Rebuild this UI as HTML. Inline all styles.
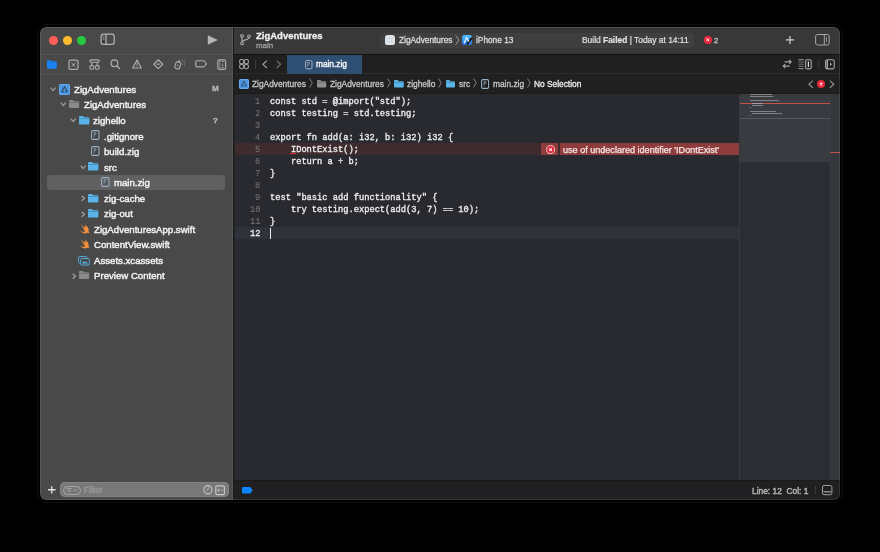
<!DOCTYPE html>
<html><head><meta charset="utf-8">
<style>
*{margin:0;padding:0;box-sizing:border-box}
html,body{width:880px;height:552px;background:#000;overflow:hidden;font-family:"Liberation Sans",sans-serif;}
.a{position:absolute}
.t{position:absolute;white-space:pre;line-height:1;-webkit-text-stroke-width:0.3px;will-change:transform}
svg{overflow:visible}
</style></head><body>

<div class="a" style="left:40px;top:27px;width:800px;height:473px;border-radius:6px;overflow:hidden;background:#292a30">
<div class="a" style="left:0px;top:0px;width:192px;height:473px;background:#494949;"></div>
<div class="a" style="left:0px;top:27px;width:192px;height:1px;background:#525252;"></div>
<div class="a" style="left:0px;top:46.6px;width:192px;height:1px;background:#525252;"></div>
<div class="a" style="left:192px;top:0px;width:1px;height:473px;background:#565656;"></div>
<div class="a" style="left:193px;top:0px;width:1px;height:473px;background:#1a1a1a;"></div>
<div class="a" style="left:194px;top:0px;width:1px;height:473px;background:#232428;"></div>
<div class="a" style="left:194px;top:0px;width:606px;height:27px;background:#383838;"></div>
<div class="a" style="left:194px;top:26.5px;width:606px;height:1.5px;background:#121212;"></div>
<div class="a" style="left:194px;top:28px;width:606px;height:18px;background:#202020;"></div>
<div class="a" style="left:194px;top:46px;width:606px;height:1.2px;background:#2c2c2c;"></div>
<div class="a" style="left:194px;top:47.2px;width:606px;height:18.8px;background:#202020;"></div>
<div class="a" style="left:194px;top:65.6px;width:606px;height:1px;background:#1b1b1c;"></div>
<div class="a" style="left:195px;top:67px;width:504px;height:386px;background:#292a30;"></div>
<div class="a" style="left:699px;top:67px;width:1px;height:386px;background:#38393e;"></div>
<div class="a" style="left:700px;top:67px;width:90px;height:386px;background:#2c2d32;"></div>
<div class="a" style="left:700px;top:67px;width:90px;height:68px;background:#3a3b40;"></div>
<div class="a" style="left:790px;top:67px;width:10px;height:386px;background:#35363b;"></div>
<div class="a" style="left:790px;top:67px;width:1px;height:386px;background:#3d3e43;"></div>
<div class="a" style="left:194px;top:453px;width:606px;height:1px;background:#1a1a1a;"></div>
<div class="a" style="left:194px;top:454px;width:606px;height:19px;background:#202022;"></div>
<div class="a" style="left:0px;top:1px;width:800px;height:1px;background:rgba(0,0,0,0.12);"></div>
</div>
<div class="a" style="left:40px;top:27px;width:800px;height:473px;border-radius:6px;box-shadow:inset 0 0 0 1px rgba(255,255,255,0.09), inset 0 1px 0 rgba(255,255,255,0.05), 0 0 0 2px #000, 0 0 0 3px #0f0f0f;"></div>
<div class="a" style="left:48.7px;top:35.6px;width:9px;height:9px;border-radius:50%;background:#fe5f57"></div>
<div class="a" style="left:63.0px;top:35.6px;width:9px;height:9px;border-radius:50%;background:#febc2e"></div>
<div class="a" style="left:77.0px;top:35.6px;width:9px;height:9px;border-radius:50%;background:#28c840"></div>
<svg class="a" style="left:100.4px;top:33.3px;" width="16" height="12.5" viewBox="0 0 16 12.5"><rect x="1.1" y="1.1" width="13.1" height="10.3" rx="2.3" fill="none" stroke="#b2b2b2" stroke-width="1.25"/><path d="M6 1.1 V11.4" stroke="#b2b2b2" stroke-width="1.25"/><path d="M2.7 3.3 H4.3 M2.7 4.8 H4.3 M2.7 6.3 H4.3" stroke="#9a9a9a" stroke-width="0.8"/><rect x="2.5" y="7.6" width="2" height="2.4" fill="#303030"/></svg>
<svg class="a" style="left:207px;top:35px;" width="12" height="10" viewBox="0 0 12 10"><path d="M0.8 0.3 L10.8 5 L0.8 9.7 Z" fill="#b4b4b4"/></svg>
<svg class="a" style="left:239.5px;top:34.4px;" width="11" height="11.2" viewBox="0 0 11 11.2"><circle cx="2" cy="1.9" r="1.35" fill="none" stroke="#a6a6a6" stroke-width="1.1"/><circle cx="2" cy="9.4" r="1.35" fill="none" stroke="#a6a6a6" stroke-width="1.1"/><circle cx="9" cy="2.3" r="1.35" fill="none" stroke="#a6a6a6" stroke-width="1.1"/><path d="M2 3.3 V8 M9 3.7 C9 6.2 2.2 5.6 2 7.8" fill="none" stroke="#a6a6a6" stroke-width="1.15"/></svg>
<div class="t" style="left:256.20px;top:30.76px;font-size:9.5px;color:#f0f0f0;font-weight:700;font-family:'Liberation Sans';">ZigAdventures</div>
<div class="t" style="left:256.20px;top:41.61px;font-size:7.9px;color:#a0a0a0;font-weight:400;font-family:'Liberation Sans';">main</div>
<div class="a" style="left:380px;top:32.5px;width:314px;height:15.5px;border-radius:4px;background:#3f3f3f"></div>
<div class="a" style="left:384.9px;top:35px;width:10px;height:10px;border-radius:2.6px;background:#dce2e5"></div>
<svg class="a" style="left:384.9px;top:35px;" width="10" height="10" viewBox="0 0 10 10"><g fill="#c4cace"><circle cx="3.5" cy="3.5" r="0.6"/><circle cx="6.5" cy="3.5" r="0.6"/><circle cx="3.5" cy="6.5" r="0.6"/><circle cx="6.5" cy="6.5" r="0.6"/></g></svg>
<div class="t" style="left:398.80px;top:36.27px;font-size:8.3px;color:#dcdcdc;font-weight:400;font-family:'Liberation Sans';">ZigAdventures</div>
<svg class="a" style="left:455px;top:35px;" width="5" height="10" viewBox="0 0 5 10"><path d="M0.8 0.5 L3.8 5 L0.8 9.5" fill="none" stroke="#a0a0a0" stroke-width="0.9"/></svg>
<div class="a" style="left:462.2px;top:35px;width:10.3px;height:10.3px;border-radius:2.6px;background:linear-gradient(180deg,#4cc0ff,#2a70e6)"></div>
<svg class="a" style="left:462.2px;top:35px;" width="10.3" height="10.3" viewBox="0 0 10.3 10.3"><path d="M4.6 2.3 L2.2 8.2 M4.6 2.3 L6.6 6.2" stroke="#f2f8ff" stroke-width="1.1" fill="none"/><path d="M9.3 3.6 L5.4 8.8" stroke="#101010" stroke-width="1.9" stroke-linecap="round"/><circle cx="6.5" cy="5.8" r="0.9" fill="#e0e0e0"/></svg>
<div class="t" style="left:475.60px;top:36.27px;font-size:8.3px;color:#dcdcdc;font-weight:400;font-family:'Liberation Sans';">iPhone 13</div>
<div class="t" style="left:582.40px;top:36.27px;font-size:8.42px;color:#e0e0e0;font-weight:400;font-family:'Liberation Sans';-webkit-text-stroke-width:0.2px">Build <b>Failed</b> | Today at 14:11</div>
<div class="a" style="left:704.3px;top:36.3px;width:7.5px;height:7.5px;border-radius:50%;background:#e8283c"></div>
<svg class="a" style="left:704.3px;top:36.3px;" width="7.5" height="7.5" viewBox="0 0 7.5 7.5"><path d="M2.4 2.4 L5.1 5.1 M5.1 2.4 L2.4 5.1" stroke="#fff" stroke-width="1"/></svg>
<div class="t" style="left:713.60px;top:36.87px;font-size:7.6px;color:#c4c4c4;font-weight:400;font-family:'Liberation Sans';">2</div>
<svg class="a" style="left:785px;top:35.2px;" width="10" height="9.5" viewBox="0 0 10 9.5"><path d="M5 0.9 V8.9 M0.9 4.9 H9.1" stroke="#cccccc" stroke-width="1.25"/></svg>
<svg class="a" style="left:815px;top:34px;" width="15" height="12" viewBox="0 0 15 12"><rect x="0.6" y="0.5" width="13.6" height="10.5" rx="2" fill="none" stroke="#a6a6a6" stroke-width="1"/><line x1="9.3" y1="0.5" x2="9.3" y2="11" stroke="#a6a6a6" stroke-width="1"/><line x1="11.5" y1="3" x2="11.5" y2="8" stroke="#a6a6a6" stroke-width="0.8"/></svg>
<svg class="a" style="left:46.5px;top:59.5px;" width="10" height="9" viewBox="0 0 10 9"><path d="M0 1 Q0 0.2 0.8 0.2 H3.6 L4.6 1.3 H9.1 Q9.8 1.3 9.8 2 V8 Q9.8 8.7 9.1 8.7 H0.7 Q0 8.7 0 8 Z" fill="#1a84f5"/><path d="M0 2.4 H9.8" stroke="#1466c0" stroke-width="0.5"/></svg>
<svg class="a" style="left:67.5px;top:58.6px;" width="11" height="11" viewBox="0 0 11 11"><rect x="1" y="1" width="9" height="9.4" rx="1.6" fill="none" stroke="#acacac" stroke-width="1.25"/><path d="M3.3 3.3 L7.7 8.1 M7.7 3.3 L3.3 8.1" stroke="#acacac" stroke-width="0.7"/><circle cx="5.5" cy="5.7" r="0.8" fill="#d0d0d0"/></svg>
<svg class="a" style="left:88.5px;top:58.6px;" width="11" height="11" viewBox="0 0 11 11"><rect x="0.9" y="0.9" width="9.3" height="2.3" rx="1.15" fill="none" stroke="#acacac" stroke-width="1.15"/><path d="M2.8 3.2 V6.4 M8.2 3.2 V6.4" stroke="#acacac" stroke-width="1.1"/><rect x="0.9" y="6.6" width="3.8" height="3.6" rx="1.2" fill="none" stroke="#acacac" stroke-width="1.15"/><rect x="6.4" y="6.6" width="3.8" height="3.6" rx="1.2" fill="none" stroke="#acacac" stroke-width="1.15"/></svg>
<svg class="a" style="left:110px;top:58.5px;" width="11" height="11" viewBox="0 0 11 11"><circle cx="4.4" cy="4.3" r="3.4" fill="none" stroke="#acacac" stroke-width="1.2"/><path d="M6.9 6.9 L9.5 9.6" stroke="#acacac" stroke-width="1.4" stroke-linecap="round"/></svg>
<svg class="a" style="left:131.5px;top:58.5px;" width="10" height="10" viewBox="0 0 10 10"><path d="M5 1 L9.3 9 H0.7 Z" fill="none" stroke="#acacac" stroke-width="1.2" stroke-linejoin="round"/><path d="M5 3.6 V6.6" stroke="#acacac" stroke-width="0.9"/><circle cx="5" cy="7.6" r="0.5" fill="#acacac"/></svg>
<svg class="a" style="left:152.5px;top:58.5px;" width="11" height="11" viewBox="0 0 11 11"><path d="M5.3 0.8 L9.8 5.2 L5.3 9.6 L0.8 5.2 Z" fill="none" stroke="#acacac" stroke-width="1.2" stroke-linejoin="round"/><path d="M4 5.2 H6.6" stroke="#acacac" stroke-width="1.3" stroke-linecap="round"/></svg>
<svg class="a" style="left:173.5px;top:58.5px;" width="12" height="11" viewBox="0 0 12 11"><g transform="rotate(18 3.6 6.5)"><rect x="1.2" y="3" width="5" height="6.8" rx="1.5" fill="none" stroke="#acacac" stroke-width="1.1"/><rect x="2.6" y="1.2" width="2.2" height="1.6" fill="#acacac"/><circle cx="3.7" cy="6.4" r="0.7" fill="#acacac"/></g><g fill="#acacac" opacity="0.8"><circle cx="8.6" cy="0.9" r="0.5"/><circle cx="10.3" cy="1.9" r="0.5"/><circle cx="8.4" cy="2.9" r="0.5"/><circle cx="10.8" cy="3.9" r="0.5"/><circle cx="8.6" cy="4.9" r="0.5"/><circle cx="10.4" cy="6.1" r="0.5"/></g></svg>
<svg class="a" style="left:194.5px;top:60px;" width="12.5" height="8" viewBox="0 0 12.5 8"><path d="M2 0.75 H8.4 Q9.2 0.75 9.8 1.5 L11.3 3.75 L9.8 6 Q9.2 6.85 8.4 6.85 H2 Q0.75 6.85 0.75 5.6 V2 Q0.75 0.75 2 0.75 Z" fill="none" stroke="#acacac" stroke-width="1.2"/></svg>
<svg class="a" style="left:217px;top:58.6px;" width="9.5" height="11" viewBox="0 0 9.5 11"><rect x="0.8" y="0.9" width="7.8" height="9.4" rx="1.6" fill="none" stroke="#acacac" stroke-width="1.2"/><path d="M2.8 1 V10.2" stroke="#acacac" stroke-width="0.7"/><path d="M4.3 2.4 H7 M5.6 4.6 V7.4 M4.3 8.8 H7" stroke="#acacac" stroke-width="0.8"/></svg>
<svg class="a" style="left:239px;top:59px;" width="10" height="10.3" viewBox="0 0 10 10.3"><rect x="0.6" y="0.6" width="4.1" height="4.2" rx="1.6" fill="none" stroke="#a6a6a6" stroke-width="1.05"/><rect x="0.6" y="5.5" width="4.1" height="4.2" rx="1.6" fill="none" stroke="#a6a6a6" stroke-width="1.05"/><rect x="5.3" y="0.6" width="4.1" height="4.2" rx="1.6" fill="none" stroke="#a6a6a6" stroke-width="1.05"/><rect x="5.3" y="5.5" width="4.1" height="4.2" rx="1.6" fill="none" stroke="#a6a6a6" stroke-width="1.05"/></svg>
<div class="a" style="left:255px;top:59.5px;width:1px;height:9px;background:#3c3c3c;"></div>
<svg class="a" style="left:261.8px;top:59.6px;" width="6" height="8.6" viewBox="0 0 6 8.6"><path d="M4.9 0.6 L0.9 4.3 L4.9 8" fill="none" stroke="#a4a4a4" stroke-width="1.15"/></svg>
<svg class="a" style="left:275.6px;top:59.6px;" width="6" height="8.6" viewBox="0 0 6 8.6"><path d="M0.7 0.6 L4.5 4.3 L0.7 8" fill="none" stroke="#747474" stroke-width="1.15"/></svg>
<div class="a" style="left:287px;top:54.6px;width:75px;height:19px;background:#2f4f72;"></div>
<svg class="a" style="left:304.6px;top:59.6px;" width="7.6" height="9.4" viewBox="0 0 7.6 9.4"><rect x="0.6" y="0.6" width="6.4" height="8.2" rx="1.3" fill="rgba(0,0,0,0.1)" stroke="#a4b6c8" stroke-width="1"/><path d="M2.7 2.2 V6.8 M2.7 2.4 H4.4 V4.2 H2.7" fill="none" stroke="#8ea2b6" stroke-width="0.75"/></svg>
<div class="t" style="left:316.20px;top:59.97px;font-size:8.3px;color:#f4f6f8;font-weight:400;font-family:'Liberation Sans';-webkit-text-stroke-width:0.4px">main.zig</div>
<svg class="a" style="left:781.5px;top:59px;" width="11" height="10" viewBox="0 0 11 10"><path d="M2.6 2.9 H9 M7.2 1 L9.2 2.9 L7.2 4.8 M7.6 7.1 H1.2 M3.2 5.2 L1.2 7.1 L3.2 9" fill="none" stroke="#a6a6a6" stroke-width="1.1"/></svg>
<svg class="a" style="left:798px;top:58.8px;" width="14" height="11" viewBox="0 0 14 11"><path d="M0.4 0.7 H5.8 M0.4 9.7 H5.8" stroke="#a6a6a6" stroke-width="0.9"/><path d="M0.4 3 H5.8 M0.4 5.2 H5.8 M0.4 7.4 H5.8" stroke="#7c7c7c" stroke-width="0.9"/><rect x="7.6" y="0.7" width="5.6" height="9.2" rx="1.5" fill="none" stroke="#a6a6a6" stroke-width="1.1"/><path d="M10.4 2.6 V7.9" stroke="#d8d8d8" stroke-width="1.2"/></svg>
<div class="a" style="left:817.5px;top:59.5px;width:1px;height:8.5px;background:#363636;"></div>
<svg class="a" style="left:824.5px;top:58.8px;" width="10" height="11" viewBox="0 0 10 11"><rect x="0.6" y="0.7" width="8.6" height="9.2" rx="1.6" fill="none" stroke="#a6a6a6" stroke-width="1.1"/><path d="M2.2 1 V9.6" stroke="#d0d0d0" stroke-width="1.1"/><path d="M5 3.6 L7 5.3 L5 7 Z" fill="#a6a6a6"/></svg>
<div class="a" style="left:239px;top:79px;width:9.7px;height:9.7px;border-radius:2.2px;background:#4896e4;box-shadow:inset 0 0 0 0.8px #6cb0f2"></div>
<svg class="a" style="left:239px;top:79px;" width="9.7" height="9.7" viewBox="0 0 9.7 9.7"><path d="M4.85 2.328 L2.6189999999999998 6.402 M4.85 2.328 L7.0809999999999995 6.402 M2.328 6.789999999999999 H4.074 M5.6259999999999994 6.789999999999999 H7.372" stroke="#34465c" stroke-width="0.9215" fill="none" stroke-linecap="round"/></svg>
<div class="t" style="left:252.40px;top:79.73px;font-size:8.35px;color:#c6c6c6;font-weight:400;font-family:'Liberation Sans';">ZigAdventures</div>
<svg class="a" style="left:309px;top:78px;" width="4" height="10" viewBox="0 0 4 10"><path d="M0.5 0.5 L3.3 5.0 L0.5 9.5" fill="none" stroke="#8a8a8a" stroke-width="0.9"/></svg>
<svg class="a" style="left:316.8px;top:79.5px;" width="9.2" height="7.5" viewBox="0 0 9.2 7.5"><path d="M0 1 Q0 0 1 0 H3.4959999999999996 L4.4159999999999995 1.2 H8.2 Q9.2 1.2 9.2 2.2 V6.5 Q9.2 7.5 8.2 7.5 H1 Q0 7.5 0 6.5 Z" fill="#8e8e8e"/><path d="M0 2.25 H9.2" stroke="rgba(0,0,0,0.28)" stroke-width="0.7"/></svg>
<div class="t" style="left:330.00px;top:79.73px;font-size:8.35px;color:#c6c6c6;font-weight:400;font-family:'Liberation Sans';">ZigAdventures</div>
<svg class="a" style="left:387px;top:78px;" width="4" height="10" viewBox="0 0 4 10"><path d="M0.5 0.5 L3.3 5.0 L0.5 9.5" fill="none" stroke="#8a8a8a" stroke-width="0.9"/></svg>
<svg class="a" style="left:393.9px;top:79.5px;" width="9.8" height="7.5" viewBox="0 0 9.8 7.5"><path d="M0 1 Q0 0 1 0 H3.724 L4.704 1.2 H8.8 Q9.8 1.2 9.8 2.2 V6.5 Q9.8 7.5 8.8 7.5 H1 Q0 7.5 0 6.5 Z" fill="#5bb4e8"/><path d="M0 2.25 H9.8" stroke="rgba(0,0,0,0.28)" stroke-width="0.7"/></svg>
<div class="t" style="left:407.20px;top:79.73px;font-size:8.35px;color:#c6c6c6;font-weight:400;font-family:'Liberation Sans';">zighello</div>
<svg class="a" style="left:438.4px;top:78px;" width="4" height="10" viewBox="0 0 4 10"><path d="M0.5 0.5 L3.3 5.0 L0.5 9.5" fill="none" stroke="#8a8a8a" stroke-width="0.9"/></svg>
<svg class="a" style="left:446px;top:79.5px;" width="9" height="7.5" viewBox="0 0 9 7.5"><path d="M0 1 Q0 0 1 0 H3.42 L4.32 1.2 H8 Q9 1.2 9 2.2 V6.5 Q9 7.5 8 7.5 H1 Q0 7.5 0 6.5 Z" fill="#5bb4e8"/><path d="M0 2.25 H9" stroke="rgba(0,0,0,0.28)" stroke-width="0.7"/></svg>
<div class="t" style="left:458.70px;top:79.73px;font-size:8.35px;color:#c6c6c6;font-weight:400;font-family:'Liberation Sans';">src</div>
<svg class="a" style="left:473px;top:78px;" width="4" height="10" viewBox="0 0 4 10"><path d="M0.5 0.5 L3.3 5.0 L0.5 9.5" fill="none" stroke="#8a8a8a" stroke-width="0.9"/></svg>
<svg class="a" style="left:480.8px;top:78.6px;" width="8.2" height="10" viewBox="0 0 8.2 10"><rect x="0.6" y="0.6" width="6.999999999999999" height="8.8" rx="1.4" fill="rgba(0,0,0,0.1)" stroke="#9cb2c6" stroke-width="1.05"/><path d="M3 2.4 V7.4 M3 2.6 H4.8 V4.6 H3" fill="none" stroke="#8498ac" stroke-width="0.8"/></svg>
<div class="t" style="left:493.30px;top:79.73px;font-size:8.35px;color:#c6c6c6;font-weight:400;font-family:'Liberation Sans';">main.zig</div>
<svg class="a" style="left:527.4px;top:78px;" width="4" height="10" viewBox="0 0 4 10"><path d="M0.5 0.5 L3.3 5.0 L0.5 9.5" fill="none" stroke="#8a8a8a" stroke-width="0.9"/></svg>
<div class="t" style="left:533.50px;top:79.73px;font-size:8.35px;color:#ececec;font-weight:400;font-family:'Liberation Sans';">No Selection</div>
<svg class="a" style="left:807.8px;top:79.8px;" width="6" height="8.4" viewBox="0 0 6 8.4"><path d="M4.8 0.6 L0.9 4.2 L4.8 7.8" fill="none" stroke="#8e8e8e" stroke-width="1.2"/></svg>
<div class="a" style="left:817px;top:79.9px;width:8.2px;height:8.2px;border-radius:50%;background:#e8283c"></div>
<svg class="a" style="left:817px;top:79.9px;" width="8.2" height="8.2" viewBox="0 0 8.2 8.2"><path d="M2.9 2.9 L5.3 5.3 M5.3 2.9 L2.9 5.3" stroke="#fff" stroke-width="1.1"/></svg>
<svg class="a" style="left:828.6px;top:79.8px;" width="6" height="8.4" viewBox="0 0 6 8.4"><path d="M0.9 0.6 L4.8 4.2 L0.9 7.8" fill="none" stroke="#8e8e8e" stroke-width="1.2"/></svg>
<div class="a" style="left:46.8px;top:175.2px;width:178.6px;height:15.2px;border-radius:4px;background:#616161"></div>
<svg class="a" style="left:50px;top:86.9px;" width="6.4" height="4.6" viewBox="0 0 6.4 4.6"><path d="M0.7 0.7 L3.2 3.6 L5.7 0.7" fill="none" stroke="#a2a2a2" stroke-width="1.2"/></svg>
<div class="a" style="left:58.8px;top:83.9px;width:11px;height:11px;border-radius:2.2px;background:#4896e4;box-shadow:inset 0 0 0 0.8px #6cb0f2"></div>
<svg class="a" style="left:58.8px;top:83.9px;" width="11" height="11" viewBox="0 0 11 11"><path d="M5.5 2.6399999999999997 L2.97 7.260000000000001 M5.5 2.6399999999999997 L8.03 7.260000000000001 M2.6399999999999997 7.699999999999999 H4.62 M6.38 7.699999999999999 H8.36" stroke="#34465c" stroke-width="1.045" fill="none" stroke-linecap="round"/></svg>
<div class="t" style="left:74.10px;top:84.88px;font-size:9.65px;color:#f0f0f0;font-weight:400;font-family:'Liberation Sans';-webkit-text-stroke-width:0.45px">ZigAdventures</div>
<div class="t" style="left:211.60px;top:85.43px;font-size:8.0px;color:#bababa;font-weight:700;font-family:'Liberation Sans';">M</div>
<svg class="a" style="left:60px;top:102.45px;" width="6.4" height="4.6" viewBox="0 0 6.4 4.6"><path d="M0.7 0.7 L3.2 3.6 L5.7 0.7" fill="none" stroke="#a2a2a2" stroke-width="1.2"/></svg>
<svg class="a" style="left:69px;top:100.05px;" width="10.2" height="8" viewBox="0 0 10.2 8"><path d="M0 1 Q0 0 1 0 H3.876 L4.896 1.28 H9.2 Q10.2 1.28 10.2 2.2800000000000002 V7 Q10.2 8 9.2 8 H1 Q0 8 0 7 Z" fill="#8a8a8a"/><path d="M0 2.4 H10.2" stroke="rgba(0,0,0,0.28)" stroke-width="0.7"/></svg>
<div class="t" style="left:83.80px;top:100.43px;font-size:9.65px;color:#f0f0f0;font-weight:400;font-family:'Liberation Sans';-webkit-text-stroke-width:0.45px">ZigAdventures</div>
<svg class="a" style="left:70px;top:118.00000000000001px;" width="6.4" height="4.6" viewBox="0 0 6.4 4.6"><path d="M0.7 0.7 L3.2 3.6 L5.7 0.7" fill="none" stroke="#a2a2a2" stroke-width="1.2"/></svg>
<svg class="a" style="left:78.6px;top:115.80000000000001px;" width="10.4" height="8.4" viewBox="0 0 10.4 8.4"><path d="M0 1 Q0 0 1 0 H3.9520000000000004 L4.992 1.344 H9.4 Q10.4 1.344 10.4 2.3440000000000003 V7.4 Q10.4 8.4 9.4 8.4 H1 Q0 8.4 0 7.4 Z" fill="#5ab4ea"/><path d="M0 2.52 H10.4" stroke="rgba(0,0,0,0.28)" stroke-width="0.7"/></svg>
<div class="t" style="left:93.40px;top:115.98px;font-size:9.65px;color:#f0f0f0;font-weight:400;font-family:'Liberation Sans';-webkit-text-stroke-width:0.45px">zighello</div>
<div class="t" style="left:213.00px;top:117.23px;font-size:8.0px;color:#bababa;font-weight:700;font-family:'Liberation Sans';">?</div>
<svg class="a" style="left:90.6px;top:130.40000000000003px;" width="8.6" height="10" viewBox="0 0 8.6 10"><rect x="0.6" y="0.6" width="7.4" height="8.8" rx="1.4" fill="rgba(0,0,0,0.08)" stroke="#9cb2c6" stroke-width="1.05"/><path d="M3.1 2.3 V7.3 M3.1 2.5 H4.9 V4.4 H3.1" fill="none" stroke="#8498ac" stroke-width="0.8"/></svg>
<div class="t" style="left:103.60px;top:131.53px;font-size:9.65px;color:#f0f0f0;font-weight:400;font-family:'Liberation Sans';-webkit-text-stroke-width:0.45px">.gitignore</div>
<svg class="a" style="left:90.6px;top:145.95000000000002px;" width="8.6" height="10" viewBox="0 0 8.6 10"><rect x="0.6" y="0.6" width="7.4" height="8.8" rx="1.4" fill="rgba(0,0,0,0.08)" stroke="#9cb2c6" stroke-width="1.05"/><path d="M3.1 2.3 V7.3 M3.1 2.5 H4.9 V4.4 H3.1" fill="none" stroke="#8498ac" stroke-width="0.8"/></svg>
<div class="t" style="left:103.60px;top:147.08px;font-size:9.65px;color:#f0f0f0;font-weight:400;font-family:'Liberation Sans';-webkit-text-stroke-width:0.45px">build.zig</div>
<svg class="a" style="left:80px;top:164.64999999999998px;" width="6.4" height="4.6" viewBox="0 0 6.4 4.6"><path d="M0.7 0.7 L3.2 3.6 L5.7 0.7" fill="none" stroke="#a2a2a2" stroke-width="1.2"/></svg>
<svg class="a" style="left:88.4px;top:162.45px;" width="10.4" height="8.4" viewBox="0 0 10.4 8.4"><path d="M0 1 Q0 0 1 0 H3.9520000000000004 L4.992 1.344 H9.4 Q10.4 1.344 10.4 2.3440000000000003 V7.4 Q10.4 8.4 9.4 8.4 H1 Q0 8.4 0 7.4 Z" fill="#5ab4ea"/><path d="M0 2.52 H10.4" stroke="rgba(0,0,0,0.28)" stroke-width="0.7"/></svg>
<div class="t" style="left:103.60px;top:162.63px;font-size:9.65px;color:#f0f0f0;font-weight:400;font-family:'Liberation Sans';-webkit-text-stroke-width:0.45px">src</div>
<svg class="a" style="left:100.7px;top:177.05px;" width="8.6" height="10" viewBox="0 0 8.6 10"><rect x="0.6" y="0.6" width="7.4" height="8.8" rx="1.4" fill="rgba(0,0,0,0.08)" stroke="#9cb2c6" stroke-width="1.05"/><path d="M3.1 2.3 V7.3 M3.1 2.5 H4.9 V4.4 H3.1" fill="none" stroke="#8498ac" stroke-width="0.8"/></svg>
<div class="t" style="left:113.70px;top:178.18px;font-size:9.65px;color:#f0f0f0;font-weight:400;font-family:'Liberation Sans';-webkit-text-stroke-width:0.45px">main.zig</div>
<svg class="a" style="left:81px;top:194.95000000000002px;" width="4.4" height="6.4" viewBox="0 0 4.4 6.4"><path d="M0.7 0.7 L3.5 3.2 L0.7 5.7" fill="none" stroke="#a2a2a2" stroke-width="1.2"/></svg>
<svg class="a" style="left:88.4px;top:193.55px;" width="10.4" height="8.4" viewBox="0 0 10.4 8.4"><path d="M0 1 Q0 0 1 0 H3.9520000000000004 L4.992 1.344 H9.4 Q10.4 1.344 10.4 2.3440000000000003 V7.4 Q10.4 8.4 9.4 8.4 H1 Q0 8.4 0 7.4 Z" fill="#5ab4ea"/><path d="M0 2.52 H10.4" stroke="rgba(0,0,0,0.28)" stroke-width="0.7"/></svg>
<div class="t" style="left:103.60px;top:193.73px;font-size:9.65px;color:#f0f0f0;font-weight:400;font-family:'Liberation Sans';-webkit-text-stroke-width:0.45px">zig-cache</div>
<svg class="a" style="left:81px;top:210.50000000000003px;" width="4.4" height="6.4" viewBox="0 0 4.4 6.4"><path d="M0.7 0.7 L3.5 3.2 L0.7 5.7" fill="none" stroke="#a2a2a2" stroke-width="1.2"/></svg>
<svg class="a" style="left:88.4px;top:209.10000000000002px;" width="10.4" height="8.4" viewBox="0 0 10.4 8.4"><path d="M0 1 Q0 0 1 0 H3.9520000000000004 L4.992 1.344 H9.4 Q10.4 1.344 10.4 2.3440000000000003 V7.4 Q10.4 8.4 9.4 8.4 H1 Q0 8.4 0 7.4 Z" fill="#5ab4ea"/><path d="M0 2.52 H10.4" stroke="rgba(0,0,0,0.28)" stroke-width="0.7"/></svg>
<div class="t" style="left:103.60px;top:209.28px;font-size:9.65px;color:#f0f0f0;font-weight:400;font-family:'Liberation Sans';-webkit-text-stroke-width:0.45px">zig-out</div>
<svg class="a" style="left:78.7px;top:223.85000000000002px" width="10.6" height="9.6" viewBox="0.3 1.5 20.9 19"><path d="M13.543 3.85c4.114 2.472 6.545 7.238 5.549 11.27-.024.095-.05.183-.076.273l.002.001c2.062 2.538 1.5 5.258 1.236 4.745-1.072-2.086-3.066-1.568-4.088-1.043a6.803 6.803 0 0 1-.281.158l-.02.012-.002.002c-2.115 1.123-4.957 1.205-7.812-.022a12.568 12.568 0 0 1-5.640-4.838c.649.48 1.35.902 2.097 1.252 3.019 1.414 6.051 1.311 8.197-.002C9.651 12.73 7.101 9.67 5.146 7.191a10.628 10.628 0 0 1-1.005-1.384c2.34 2.142 6.038 4.83 7.365 5.576C8.69 8.408 6.208 4.743 3.18 1.7c2.661 2.3 6.088 4.998 8.943 6.907.082.054.157.104.231.152.053-.17.102-.353.143-.547.994-4.3-.912-8.6-1.907-10.052z" fill="#f58f3b"/></svg>
<div class="t" style="left:93.80px;top:224.83px;font-size:9.65px;color:#f0f0f0;font-weight:400;font-family:'Liberation Sans';-webkit-text-stroke-width:0.45px">ZigAdventuresApp.swift</div>
<svg class="a" style="left:78.7px;top:239.39999999999998px" width="10.6" height="9.6" viewBox="0.3 1.5 20.9 19"><path d="M13.543 3.85c4.114 2.472 6.545 7.238 5.549 11.27-.024.095-.05.183-.076.273l.002.001c2.062 2.538 1.5 5.258 1.236 4.745-1.072-2.086-3.066-1.568-4.088-1.043a6.803 6.803 0 0 1-.281.158l-.02.012-.002.002c-2.115 1.123-4.957 1.205-7.812-.022a12.568 12.568 0 0 1-5.640-4.838c.649.48 1.35.902 2.097 1.252 3.019 1.414 6.051 1.311 8.197-.002C9.651 12.73 7.101 9.67 5.146 7.191a10.628 10.628 0 0 1-1.005-1.384c2.34 2.142 6.038 4.83 7.365 5.576C8.69 8.408 6.208 4.743 3.18 1.7c2.661 2.3 6.088 4.998 8.943 6.907.082.054.157.104.231.152.053-.17.102-.353.143-.547.994-4.3-.912-8.6-1.907-10.052z" fill="#f58f3b"/></svg>
<div class="t" style="left:93.80px;top:240.38px;font-size:9.65px;color:#f0f0f0;font-weight:400;font-family:'Liberation Sans';-webkit-text-stroke-width:0.45px">ContentView.swift</div>
<svg class="a" style="left:78px;top:255.65px;" width="12" height="9.5" viewBox="0 0 12 9.5"><rect x="0.5" y="0.5" width="8.5" height="6.5" rx="1.3" fill="none" stroke="#5ab2e6" stroke-width="0.9"/><rect x="2.6" y="2.5" width="8.8" height="6.5" rx="1.3" fill="#484848" stroke="#5ab2e6" stroke-width="0.9"/><path d="M4 7.5 L6 5 L7.5 6.5 L8.5 5.5 L10 7.5 Z" fill="#5ab2e6"/></svg>
<div class="t" style="left:93.80px;top:255.93px;font-size:9.65px;color:#f0f0f0;font-weight:400;font-family:'Liberation Sans';-webkit-text-stroke-width:0.45px">Assets.xcassets</div>
<svg class="a" style="left:71.6px;top:272.7px;" width="4.4" height="6.4" viewBox="0 0 4.4 6.4"><path d="M0.7 0.7 L3.5 3.2 L0.7 5.7" fill="none" stroke="#a2a2a2" stroke-width="1.2"/></svg>
<svg class="a" style="left:78.7px;top:271.1px;" width="10.2" height="8" viewBox="0 0 10.2 8"><path d="M0 1 Q0 0 1 0 H3.876 L4.896 1.28 H9.2 Q10.2 1.28 10.2 2.2800000000000002 V7 Q10.2 8 9.2 8 H1 Q0 8 0 7 Z" fill="#8a8a8a"/><path d="M0 2.4 H10.2" stroke="rgba(0,0,0,0.28)" stroke-width="0.7"/></svg>
<div class="t" style="left:93.80px;top:271.48px;font-size:9.65px;color:#f0f0f0;font-weight:400;font-family:'Liberation Sans';-webkit-text-stroke-width:0.45px">Preview Content</div>
<svg class="a" style="left:48px;top:486px;" width="8" height="8" viewBox="0 0 8 8"><path d="M3.75 0.2 V7.4 M0.1 3.75 H7.5" stroke="#e4e4e4" stroke-width="1.3"/></svg>
<div class="a" style="left:59.5px;top:482px;width:169.3px;height:15px;border-radius:5px;background:#787878;box-shadow:inset 0 0 0 1px #838383"></div>
<div class="a" style="left:62.5px;top:485.5px;width:18px;height:9px;border-radius:4.5px;border:0.9px solid #a8a8a8"></div>
<svg class="a" style="left:64.5px;top:486.5px;" width="14" height="7" viewBox="0 0 14 7"><path d="M1.5 1.5 H6.8 M2.3 3.1 H6 M3.2 4.7 H5.1" stroke="#a8a8a8" stroke-width="0.8"/><path d="M9 2.4 L10.5 3.9 L12 2.4" fill="none" stroke="#a8a8a8" stroke-width="0.8"/></svg>
<div class="t" style="left:83.75px;top:486.09px;font-size:8.4px;color:#9a9a9a;font-weight:400;font-family:'Liberation Sans';">Filter</div>
<svg class="a" style="left:203px;top:485.3px;" width="10" height="10" viewBox="0 0 10 10"><circle cx="4.9" cy="4.75" r="4.1" fill="none" stroke="#c8c8c8" stroke-width="1.1"/><path d="M5.3 1.9 Q5.8 4.9 3.4 6" fill="none" stroke="#c8c8c8" stroke-width="0.9"/></svg>
<svg class="a" style="left:215px;top:485px;" width="10.5" height="10.5" viewBox="0 0 10.5 10.5"><rect x="0.8" y="0.8" width="8.6" height="8.8" rx="1.1" fill="none" stroke="#c8c8c8" stroke-width="1.15"/><path d="M2.3 5.2 L4.2 3.8 V6.6 Z" fill="#d4d4d4"/><path d="M4 5.2 H5 M6.2 5.2 H7.8" stroke="#c0c0c0" stroke-width="0.8"/></svg>
<div class="a" style="left:235px;top:143px;width:504px;height:12px;background:#3d2b2e;"></div>
<div class="a" style="left:235px;top:227px;width:504px;height:12px;background:#2f323b;"></div>
<div class="a" style="left:541px;top:143px;width:17.2px;height:12px;background:#8e3b3b;"></div>
<div class="a" style="left:559.5px;top:143px;width:179.5px;height:12px;background:#8e3b3b;"></div>
<svg class="a" style="left:545.7px;top:144.9px;" width="9.2" height="9.2" viewBox="0 0 9.2 9.2"><circle cx="4.6" cy="4.6" r="4.05" fill="#e0283a" stroke="#f2d4d4" stroke-width="0.9"/><path d="M3.3 3.3 L5.9 5.9 M5.9 3.3 L3.3 5.9" stroke="#fff" stroke-width="1.05"/></svg>
<div class="t" style="left:563.20px;top:145.72px;font-size:9.07px;color:#f6e8e8;font-weight:400;font-family:'Liberation Sans';-webkit-text-stroke-width:0.25px">use of undeclared identifier 'IDontExist'</div>
<div class="t" style="left:254.96px;top:97.71px;font-size:8.73px;color:#717176;font-weight:400;font-family:'Liberation Mono';-webkit-text-stroke-width:0.1px">1</div>
<div class="t" style="left:270.00px;top:97.71px;font-size:8.73px;color:#ebebed;font-weight:400;font-family:'Liberation Mono';-webkit-text-stroke-width:0.35px">const std = @import("std");</div>
<div class="t" style="left:254.96px;top:109.76px;font-size:8.73px;color:#717176;font-weight:400;font-family:'Liberation Mono';-webkit-text-stroke-width:0.1px">2</div>
<div class="t" style="left:270.00px;top:109.76px;font-size:8.73px;color:#ebebed;font-weight:400;font-family:'Liberation Mono';-webkit-text-stroke-width:0.35px">const testing = std.testing;</div>
<div class="t" style="left:254.96px;top:121.81px;font-size:8.73px;color:#717176;font-weight:400;font-family:'Liberation Mono';-webkit-text-stroke-width:0.1px">3</div>
<div class="t" style="left:254.96px;top:133.86px;font-size:8.73px;color:#717176;font-weight:400;font-family:'Liberation Mono';-webkit-text-stroke-width:0.1px">4</div>
<div class="t" style="left:270.00px;top:133.86px;font-size:8.73px;color:#ebebed;font-weight:400;font-family:'Liberation Mono';-webkit-text-stroke-width:0.35px">export fn add(a: i32, b: i32) i32 {</div>
<div class="t" style="left:254.96px;top:145.91px;font-size:8.73px;color:#717176;font-weight:400;font-family:'Liberation Mono';-webkit-text-stroke-width:0.1px">5</div>
<div class="t" style="left:270.00px;top:145.91px;font-size:8.73px;color:#ebebed;font-weight:400;font-family:'Liberation Mono';-webkit-text-stroke-width:0.35px">    IDontExist();</div>
<div class="t" style="left:254.96px;top:157.96px;font-size:8.73px;color:#717176;font-weight:400;font-family:'Liberation Mono';-webkit-text-stroke-width:0.1px">6</div>
<div class="t" style="left:270.00px;top:157.96px;font-size:8.73px;color:#ebebed;font-weight:400;font-family:'Liberation Mono';-webkit-text-stroke-width:0.35px">    return a + b;</div>
<div class="t" style="left:254.96px;top:170.01px;font-size:8.73px;color:#717176;font-weight:400;font-family:'Liberation Mono';-webkit-text-stroke-width:0.1px">7</div>
<div class="t" style="left:270.00px;top:170.01px;font-size:8.73px;color:#ebebed;font-weight:400;font-family:'Liberation Mono';-webkit-text-stroke-width:0.35px">}</div>
<div class="t" style="left:254.96px;top:182.06px;font-size:8.73px;color:#717176;font-weight:400;font-family:'Liberation Mono';-webkit-text-stroke-width:0.1px">8</div>
<div class="t" style="left:254.96px;top:194.11px;font-size:8.73px;color:#717176;font-weight:400;font-family:'Liberation Mono';-webkit-text-stroke-width:0.1px">9</div>
<div class="t" style="left:270.00px;top:194.11px;font-size:8.73px;color:#ebebed;font-weight:400;font-family:'Liberation Mono';-webkit-text-stroke-width:0.35px">test "basic add functionality" {</div>
<div class="t" style="left:249.73px;top:206.16px;font-size:8.73px;color:#717176;font-weight:400;font-family:'Liberation Mono';-webkit-text-stroke-width:0.1px">10</div>
<div class="t" style="left:270.00px;top:206.16px;font-size:8.73px;color:#ebebed;font-weight:400;font-family:'Liberation Mono';-webkit-text-stroke-width:0.35px">    try testing.expect(add(3, 7) == 10);</div>
<div class="t" style="left:249.73px;top:218.21px;font-size:8.73px;color:#717176;font-weight:400;font-family:'Liberation Mono';-webkit-text-stroke-width:0.1px">11</div>
<div class="t" style="left:270.00px;top:218.21px;font-size:8.73px;color:#ebebed;font-weight:400;font-family:'Liberation Mono';-webkit-text-stroke-width:0.35px">}</div>
<div class="t" style="left:249.73px;top:230.26px;font-size:8.73px;color:#f0f0f0;font-weight:400;font-family:'Liberation Mono';-webkit-text-stroke-width:0.3px">12</div>
<div class="a" style="left:290.2px;top:153.3px;width:6.2px;height:1.1px;background:#e0282e;"></div>
<div class="a" style="left:269.5px;top:228px;width:1px;height:11px;background:#ececec;"></div>
<div class="a" style="left:740px;top:100.5px;width:90px;height:1px;background:rgba(80,140,150,0.12);"></div>
<div class="a" style="left:740px;top:103px;width:90px;height:1px;background:#c4524b;"></div>
<div class="a" style="left:740px;top:118px;width:90px;height:1px;background:#56575c;"></div>
<div class="a" style="left:749.6px;top:94px;width:22.5px;height:1px;background:#808186;"></div>
<div class="a" style="left:749.6px;top:96px;width:23.3px;height:1px;background:#808186;"></div>
<div class="a" style="left:749.6px;top:100px;width:29.2px;height:1px;background:#808186;"></div>
<div class="a" style="left:752px;top:103px;width:11.1px;height:1px;background:#a89a9a;"></div>
<div class="a" style="left:752px;top:105px;width:11.1px;height:1px;background:#808186;"></div>
<div class="a" style="left:749.6px;top:107px;width:1.4px;height:1px;background:#808186;"></div>
<div class="a" style="left:749.6px;top:111px;width:26.2px;height:1px;background:#808186;"></div>
<div class="a" style="left:752px;top:113px;width:30px;height:1px;background:#808186;"></div>
<div class="a" style="left:749.6px;top:115px;width:1.4px;height:1px;background:#808186;"></div>
<div class="a" style="left:830px;top:151.8px;width:10px;height:1.1px;background:#c0504a;"></div>
<svg class="a" style="left:241.8px;top:486.8px;" width="11" height="6.5" viewBox="0 0 11 6.5"><path d="M1.3 0 H8.3 L10.7 3.25 L8.3 6.5 H1.3 Q0 6.5 0 5.2 V1.3 Q0 0 1.3 0 Z" fill="#0b84ff"/></svg>
<div class="t" style="left:751.90px;top:486.51px;font-size:8.38px;color:#b0b0b0;font-weight:400;font-family:'Liberation Sans';-webkit-text-stroke-width:0.45px">Line: 12  Col: 1</div>
<div class="a" style="left:815px;top:486px;width:1px;height:8px;background:#3a3a3a;"></div>
<svg class="a" style="left:822px;top:485px;" width="10.5" height="10" viewBox="0 0 10.5 10"><rect x="0.5" y="0.5" width="9.4" height="9.2" rx="1.6" fill="none" stroke="#a6a6a6" stroke-width="0.95"/><path d="M1.5 6.8 H9" stroke="#a6a6a6" stroke-width="1.2"/></svg>
</body></html>
